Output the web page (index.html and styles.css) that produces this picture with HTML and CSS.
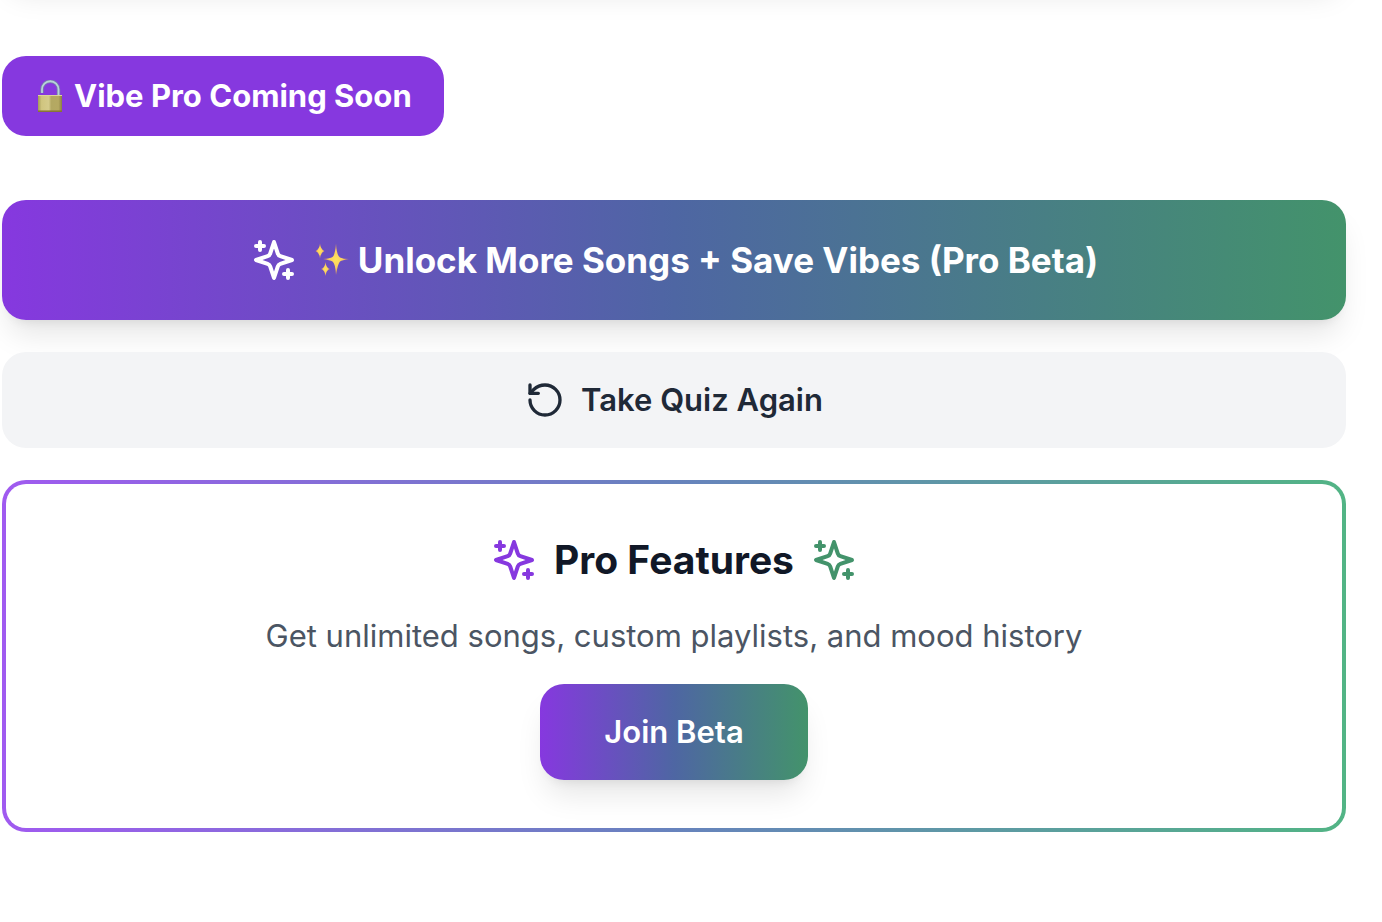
FILE: index.html
```html
<!DOCTYPE html>
<html lang="en">
<head>
<meta charset="utf-8">
<meta name="viewport" content="width=device-width, initial-scale=1">
<title>Vibe Pro</title>
<link rel="stylesheet" href="styles.css">
</head>
<body>
<svg width="0" height="0" class="sprite" aria-hidden="true">
  <symbol id="sparkles" viewBox="0 0 24 24">
    <path d="m12 3-1.912 5.813a2 2 0 0 1-1.275 1.275L3 12l5.813 1.912a2 2 0 0 1 1.275 1.275L12 21l1.912-5.813a2 2 0 0 1 1.275-1.275L21 12l-5.813-1.912a2 2 0 0 1-1.275-1.275L12 3Z"/>
    <path d="M5 3v4M19 17v4M3 5h4M17 19h4"/>
  </symbol>
</svg>
<main class="page">
  <div class="previous-card"></div>
  <button class="badge" type="button">
    <svg class="emoji" viewBox="0 0 32 32" aria-hidden="true">
      <defs>
        <linearGradient id="brass" x1="0" x2="1" y1="0" y2="0">
          <stop offset="0" stop-color="#a39a58"/><stop offset=".15" stop-color="#d0c57f"/><stop offset=".45" stop-color="#d5cb8b"/><stop offset=".55" stop-color="#b3a862"/><stop offset=".85" stop-color="#b5a962"/><stop offset="1" stop-color="#8b7f42"/>
        </linearGradient>
      </defs>
      <path d="M8 13V9.500a8.250 8.250 0 0 1 16.500 0V16" fill="none" stroke="#7482a8" stroke-width="3.400"/>
      <path d="M8 13V9.500a8.250 8.250 0 0 1 16.500 0V16" fill="none" stroke="#b9d0dc" stroke-width="1.800"/>
      <rect x="4" y="15" width="24" height="17" rx="1" fill="url(#brass)"/>
      <path d="M4 15.500h24" stroke="#ddd59b"/>
      <path d="M4 31.200h24" stroke="#857334" stroke-width="1.500"/>
    </svg>
    <span>Vibe Pro Coming Soon</span>
  </button>
  <div class="actions">
    <button class="unlock" type="button">
      <svg class="icon icon-lg" aria-hidden="true"><use href="#sparkles"/></svg>
      <span class="unlock-label">
        <svg class="emoji emoji-lg" viewBox="0 0 36 36" aria-hidden="true">
          <defs><radialGradient id="gold"><stop offset="0" stop-color="#ffe45c"/><stop offset=".5" stop-color="#fbd060"/><stop offset="1" stop-color="#d08c60"/></radialGradient></defs>
          <g fill="url(#gold)">
            <path d="M22 1.500Q22.800 14 26 15.500T35 17Q28 18 26 19.500T22 33Q21.200 21 18.500 19.500T9 17Q16 16.500 18.500 15T22 1.500Z"/>
            <path d="M6 1.500Q6.600 7.500 10.500 9Q6.600 10.500 6 16.500Q5.400 10.500 1.500 9Q5.400 7.500 6 1.500Z"/>
            <path d="M11.500 20Q12.100 26 16 27Q12.100 28 11.500 34Q10.900 28 7 27Q10.900 26 11.500 20Z"/>
          </g>
        </svg>
        <span>Unlock More Songs + Save Vibes (Pro Beta)</span>
      </span>
    </button>
    <button class="again" type="button">
      <svg class="icon" viewBox="0 0 24 24" aria-hidden="true"><path d="M3 12a9 9 0 1 0 9-9 9.750 9.750 0 0 0-6.740 2.740L3 8"/><path d="M3 3v5h5"/></svg>
      <span>Take Quiz Again</span>
    </button>
    <section class="pro">
      <div class="pro-body">
        <div class="pro-title">
          <svg class="icon icon-lg purple" aria-hidden="true"><use href="#sparkles"/></svg>
          <h2>Pro Features</h2>
          <svg class="icon icon-lg green" aria-hidden="true"><use href="#sparkles"/></svg>
        </div>
        <p>Get unlimited songs, custom playlists, and mood history</p>
        <button class="join" type="button">Join Beta</button>
      </div>
    </section>
  </div>
</main>
</body>
</html>
```
FILE: styles.css
```css
* { box-sizing: border-box; }
body {
  margin: 0;
  background: #fff;
  font-family: Inter, "Liberation Sans", sans-serif;
  font-size: 31px;
  line-height: 48px;
  overflow-x: hidden;
}
.sprite { display: none; }
.page {
  display: flex;
  flex-direction: column;
  align-items: flex-start;
  padding: 0 36px 64px 2px;
}
.previous-card {
  width: 100%;
  height: 48px;
  margin-top: -68px;
  margin-bottom: 76px;
  border-radius: 24px;
  box-shadow: 0 20px 30px -6px rgb(0 0 0 / .1), 0 8px 12px -8px rgb(0 0 0 / .1);
}
button {
  border: 0;
  border-radius: 24px;
  font: inherit;
  font-weight: 600;
  color: #fff;
  cursor: pointer;
}
.badge {
  display: flex;
  align-items: center;
  gap: 8px;
  padding: 16px 32px;
  background: #8638df;
  font-weight: 700;
}
.emoji { width: 32px; height: 32px; flex: none; }
.emoji-lg { width: 36px; height: 36px; }
.icon {
  width: 40px;
  height: 40px;
  flex: none;
  fill: none;
  stroke: currentColor;
  stroke-width: 2;
  stroke-linecap: round;
  stroke-linejoin: round;
}
.icon-lg { width: 48px; height: 48px; }
.actions {
  display: flex;
  flex-direction: column;
  gap: 32px;
  width: 100%;
  margin-top: 64px;
}
.unlock, .again {
  display: flex;
  align-items: center;
  justify-content: center;
  gap: 16px;
  width: 100%;
}
.unlock, .join {
  background: linear-gradient(90deg, #8638df, #4e66a3 50%, #43936b);
  box-shadow: 0 20px 30px -6px rgb(0 0 0 / .1), 0 8px 12px -8px rgb(0 0 0 / .1);
}
.unlock {
  padding: 32px;
  font-size: 35px;
  font-weight: 700;
  line-height: 56px;
}
.unlock-label { display: flex; align-items: center; gap: 8px; }
.again { padding: 24px; background: #f3f4f6; color: #1f2937; }
.pro {
  padding: 4px;
  border-radius: 24px;
  background: linear-gradient(90deg, #a05af0, #6783bd 50%, #52b485);
}
.pro-body {
  display: flex;
  flex-direction: column;
  align-items: center;
  gap: 24px;
  padding: 48px;
  border-radius: 20px;
  background: #fff;
  text-align: center;
}
.pro-title { display: flex; align-items: center; gap: 16px; }
.purple { color: #8638df; }
.green { color: #43936b; }
h2 { margin: 0; font-size: 39px; line-height: 56px; font-weight: 700; color: #111827; }
p { margin: 0; color: #4b5563; }
.join { padding: 24px 64px; }
```
